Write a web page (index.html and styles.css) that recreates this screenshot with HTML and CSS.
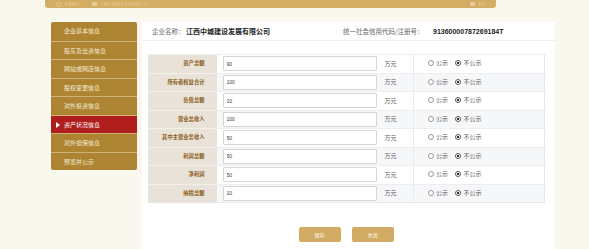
FILE: index.html
```html
<!DOCTYPE html>
<html lang="zh-CN">
<head>
    <meta charset="UTF-8">
    <title>资产状况信息</title>
    <link rel="stylesheet" href="styles.css">
</head>
<body>
    <div class="topbar">
        <div class="topbar-left">
            <span class="tb-item"><i class="tb-icon round"></i>年度报告</span>
            <span class="tb-item"><i class="tb-icon"></i>江西中城建设发展有限公司</span>
        </div>
        <span class="tb-item"><i class="tb-icon"></i>退出</span>
    </div>

    <div class="main">
        <ul class="sidebar">
            <li>企业基本信息</li>
            <li>股东及出资信息</li>
            <li>网站或网店信息</li>
            <li>股权变更信息</li>
            <li>对外投资信息</li>
            <li class="active">资产状况信息</li>
            <li>对外担保信息</li>
            <li>预览并公示</li>
        </ul>

        <div class="panel">
            <div class="panel-head">
                <div class="head-name">企业名称： <b>江西中城建设发展有限公司</b></div>
                <div class="head-code">统一社会信用代码/注册号： <b>91360000787269184T</b></div>
            </div>

            <table class="asset-table">
                <colgroup>
                    <col class="c-label">
                    <col class="c-val">
                    <col class="c-pub">
                </colgroup>
                <tbody id="rows"></tbody>
            </table>

            <div class="actions">
                <button class="btn">保存</button>
                <button class="btn">关闭</button>
            </div>
        </div>
    </div>

    <script>
        // 资产状况数据
        const items = [
            ['资产总额', '90'],
            ['所有者权益合计', '100'],
            ['负债总额', '10'],
            ['营业总收入', '100'],
            ['其中主营业务收入', '50'],
            ['利润总额', '50'],
            ['净利润', '50'],
            ['纳税总额', '10']
        ];

        const tbody = document.getElementById('rows');
        items.forEach((item, i) => {
            const tr = document.createElement('tr');
            tr.innerHTML = `
                <th>${item[0]}</th>
                <td class="val-cell"><input class="val" type="text" value="${item[1]}"><span class="unit">万元</span></td>
                <td class="pub-cell">
                    <label class="radio"><i class="dot"></i>公示</label>
                    <label class="radio"><i class="dot on"></i>不公示</label>
                </td>
            `;
            tbody.appendChild(tr);
        });
    </script>
</body>
</html>
```

FILE: styles.css
```css
body {
    margin: 0;
    background-color: #faf7ef;
    font-family: "Noto Sans CJK SC", "Liberation Sans", sans-serif;
    color: #333;
}
.topbar {
    margin-left: 45px;
    width: 451px;
    height: 8px;
    background-color: #d3ad63;
    border-radius: 0 0 3px 3px;
    display: flex;
    justify-content: space-between;
    align-items: center;
    padding: 0 10px 0 11px;
    box-sizing: border-box;
    font-size: 4px;
    line-height: 5px;
    color: #e4cb96;
}
.topbar-left {
    display: flex;
    gap: 12px;
}
.tb-item {
    display: flex;
    align-items: center;
    gap: 3px;
}
.tb-icon {
    display: inline-block;
    width: 5px;
    height: 4px;
    background-color: #e4cb96;
}
.tb-icon.round {
    background: none;
    border: 1px solid #e4cb96;
    border-radius: 50%;
    width: 3px;
    height: 3px;
}
.main {
    display: flex;
    margin-top: 14px;
    padding-left: 51px;
}
.sidebar {
    list-style: none;
    margin: 0;
    padding: 0;
    width: 86px;
    height: 148px;
    background-color: #ad8431;
    border-radius: 2px;
}
.sidebar li {
    height: 18.5px;
    box-sizing: border-box;
    border-top: 1px solid #cfb27a;
    padding-left: 13px;
    font-size: 6px;
    line-height: 17.5px;
    color: #f6ecd6;
    position: relative;
}
.sidebar li:first-child {
    border-top: none;
    line-height: 18.5px;
}
.sidebar li.active {
    background-color: #b01d1d;
    color: #fff;
}
.sidebar li.active::before {
    content: "";
    position: absolute;
    left: 5px;
    top: 6px;
    border-left: 4px solid #fff;
    border-top: 3px solid transparent;
    border-bottom: 3px solid transparent;
}
.panel {
    margin-left: 5px;
    width: 413px;
    height: 227px;
    background-color: #fff;
    padding: 0 11px 0 6px;
    box-sizing: border-box;
}
.panel-head {
    display: flex;
    height: 18px;
    align-items: center;
    border-bottom: 1px solid #f0f0f0;
    margin: 0 -11px 0 -6px;
    padding-left: 10px;
    font-size: 6.5px;
    color: #666;
}
.head-name {
    width: 191px;
}
.head-name b,
.head-code b {
    color: #222;
    font-size: 7px;
}
.head-code b {
    margin-left: 8px;
    font-family: "Liberation Sans", sans-serif;
}
.asset-table {
    width: 396px;
    margin-top: 13px;
    border-collapse: collapse;
    border: 1px solid #e6e6e6;
    table-layout: fixed;
    font-size: 6px;
    line-height: 1;
}
.c-label { width: 68px; }
.c-val { width: 197px; }
.c-pub { width: 131px; }
.asset-table tr {
    height: 18.5px;
}
.asset-table tr:nth-child(even) td {
    background-color: #f6f7f9;
}
.asset-table th {
    background-color: #e9e2d8;
    text-align: right;
    padding: 0 12px 0 0;
    font-size: 5.3px;
    color: #8a5a16;
    font-weight: bold;
    white-space: nowrap;
    border-top: 1px solid #f3efe9;
}
.asset-table td {
    border-top: 1px solid #eceef1;
    padding: 0;
}
.val-cell {
    border-right: 1px solid #e9eaee;
    white-space: nowrap;
}
.val {
    width: 154px;
    height: 15px;
    box-sizing: border-box;
    margin: 0 0 0 6px;
    padding: 0 3px;
    border: 1px solid #d5d5d5;
    border-radius: 1px;
    font-size: 5px;
    font-family: "Liberation Sans", sans-serif;
    color: #333;
    vertical-align: middle;
}
.unit {
    margin-left: 8px;
    font-size: 6px;
    color: #555;
    vertical-align: middle;
}
.asset-table .pub-cell {
    padding-left: 14px;
    font-size: 6px;
    color: #555;
    white-space: nowrap;
}
.radio {
    display: inline-flex;
    align-items: center;
    gap: 2px;
    margin-right: 6px;
}
.dot {
    width: 4px;
    height: 4px;
    border: 1px solid #999;
    border-radius: 50%;
    background-color: #fff;
    display: inline-block;
}
.dot.on {
    border-color: #555;
    background: radial-gradient(circle, #333 45%, #fff 55%);
}
.actions {
    display: flex;
    justify-content: center;
    gap: 11px;
    width: 396px;
    margin-top: 24px;
}
.btn {
    width: 42px;
    height: 15px;
    padding: 0;
    border: none;
    border-radius: 2px;
    background-color: #d2ab63;
    color: #fff;
    font-size: 5px;
    font-family: "Noto Sans CJK SC", sans-serif;
    cursor: pointer;
}
```
